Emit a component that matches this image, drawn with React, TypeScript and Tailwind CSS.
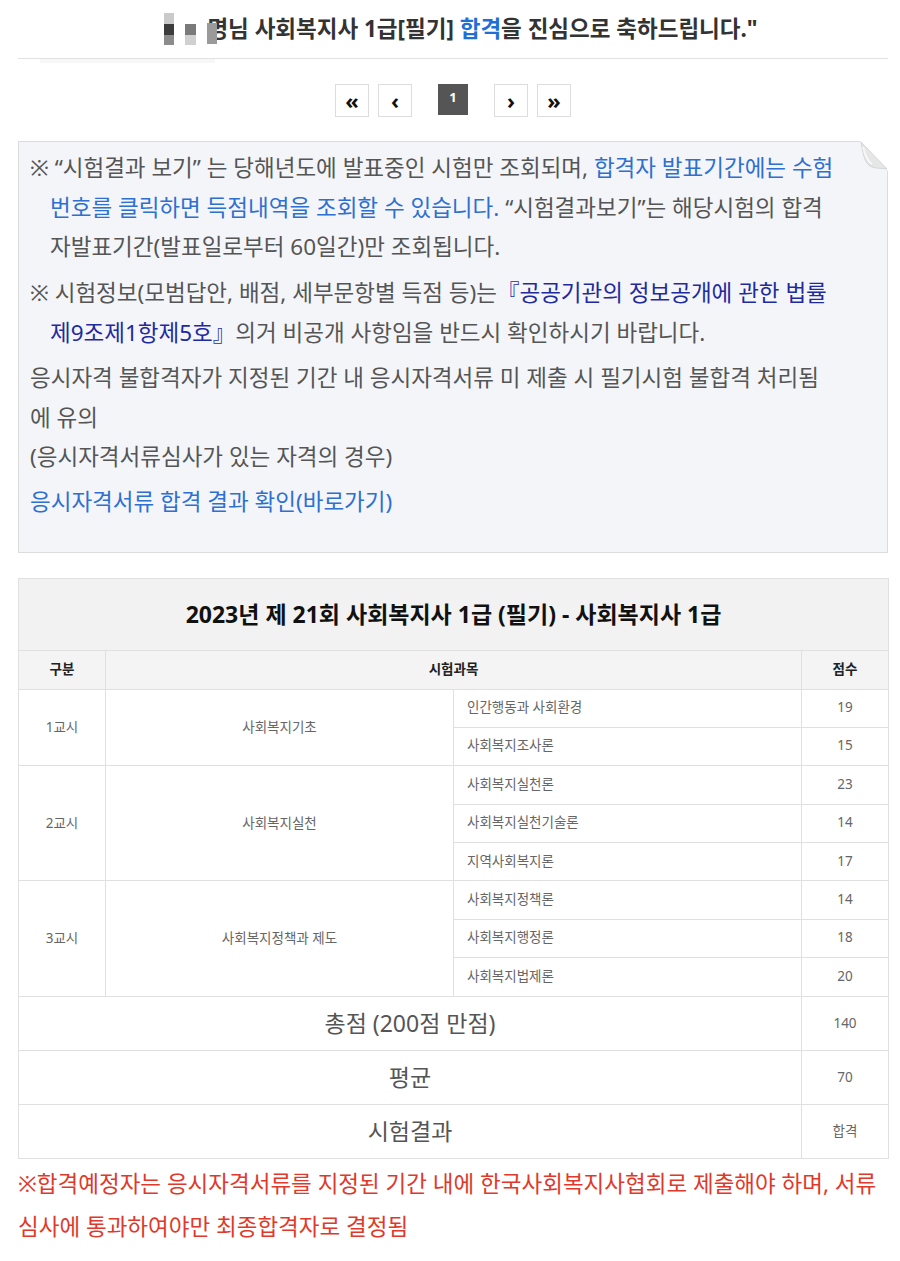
import React from "react";

const FONT = "font-['Noto_Sans','Noto_Sans_CJK_KR',sans-serif]";

function PageBtn({ children, className = "" }: { children: React.ReactNode; className?: string }) {
  return (
    <div
      className={`flex h-[33px] w-[34px] items-center justify-center border border-[#dddddd] bg-white pb-[2px] text-[22px] font-bold leading-none text-[#111] ${className}`}
    >
      {children}
    </div>
  );
}

const rows: { group: string; groupName: string; subjects: [string, string][] }[] = [
  { group: "1교시", groupName: "사회복지기초", subjects: [["인간행동과 사회환경", "19"], ["사회복지조사론", "15"]] },
  {
    group: "2교시",
    groupName: "사회복지실천",
    subjects: [["사회복지실천론", "23"], ["사회복지실천기술론", "14"], ["지역사회복지론", "17"]],
  },
  {
    group: "3교시",
    groupName: "사회복지정책과 제도",
    subjects: [["사회복지정책론", "14"], ["사회복지행정론", "18"], ["사회복지법제론", "20"]],
  },
];

const cell = "border border-[#e0e0e0]";

export default function App() {
  return (
    <div className={`${FONT} min-h-[1261px] w-[900px] bg-white px-[18px] pr-[12px]`}>
      {/* Title */}
      <div className="flex h-[59px] items-center justify-center border-b border-[#e2e2e2] pl-[16px]">
        <div className="flex items-center">
          <div className="flex h-[32px] items-start">
            <div className="flex w-[10px] flex-col">
              <div className="h-[11px] bg-[#cacaca]" />
              <div className="h-[11px] bg-[#3c3c3c]" />
              <div className="h-[10px] bg-[#8c8c8c]" />
            </div>
            <div className="ml-[11px] mt-[11px] flex w-[11px] flex-col">
              <div className="h-[11px] bg-[#7a7a7a]" />
              <div className="h-[10px] bg-[#d0d0d0]" />
            </div>
          </div>
          <div className="relative ml-[11px] text-[22.5px] font-bold leading-[30px] text-[#333]">
            <div className="absolute left-0 top-[9px] h-[21px] w-[10px] bg-[#9a9a9a]" />
            명님 사회복지사 1급[필기] <span className="text-[#1f6fd6]">합격</span>을 진심으로 축하드립니다."
          </div>
        </div>
      </div>
      <div className="ml-[22px] h-[4px] w-[175px] bg-[#f7f7f7]" />

      {/* Pagination */}
      <div className="mt-[21px] flex items-start justify-center">
        <PageBtn>«</PageBtn>
        <PageBtn className="ml-[9px]">‹</PageBtn>
        <div className="ml-[26px] flex h-[31px] w-[30px] items-center justify-center bg-[#555555] pb-[3px] text-[13px] font-bold text-white">
          1
        </div>
        <PageBtn className="ml-[26px]">›</PageBtn>
        <PageBtn className="ml-[9px]">»</PageBtn>
      </div>

      {/* Notice */}
      <div className="relative mt-[24px] border border-[#dcdcdc] bg-[#f4f5f9] pb-[30px] pl-[11px] pr-[8px] pt-[6px] text-[22.5px] leading-[39.5px] text-[#555]">
        <svg className="absolute right-[-1px] top-[-1px]" width="28" height="30" viewBox="0 0 28 30">
          <polygon points="0,0 28,0 28,30" fill="#ffffff" />
          <path d="M1 1 L27 28 C22 27 15 28 10 25 C4 21 3 12 1 1 Z" fill="#e6e6e6" stroke="#cfcfcf" strokeWidth="0.8" />
          <path d="M3 6 C5 14 7 20 12 23" stroke="#f7f7f7" strokeWidth="2" fill="none" />
        </svg>
        <p className="whitespace-nowrap pl-[20px] -indent-[20px]">
          ※ “시험결과 보기” 는 당해년도에 발표중인 시험만 조회되며, <span className="text-[#2e6fd2]">합격자 발표기간에는 수험</span>
          <br />
          <span className="text-[#2e6fd2]">번호를 클릭하면 득점내역을 조회할 수 있습니다.</span> “시험결과보기”는 해당시험의 합격
          <br />
          자발표기간(발표일로부터 60일간)만 조회됩니다.
        </p>
        <p className="mt-[6.5px] whitespace-nowrap pl-[20px] -indent-[20px]">
          ※ 시험정보(모범답안, 배점, 세부문항별 득점 등)는<span className="text-[#1e2a9e]">『공공기관의 정보공개에 관한 법률</span>
          <br />
          <span className="text-[#1e2a9e]">제9조제1항제5호』</span>의거 비공개 사항임을 반드시 확인하시기 바랍니다.
        </p>
        <p className="mt-[6px] whitespace-nowrap">
          응시자격 불합격자가 지정된 기간 내 응시자격서류 미 제출 시 필기시험 불합격 처리됨
          <br />에 유의
          <br />
          (응시자격서류심사가 있는 자격의 경우)
        </p>
        <p className="mt-[5.5px] text-[#2e6fd2]">응시자격서류 합격 결과 확인(바로가기)</p>
      </div>

      {/* Score table */}
      <table className="mt-[25px] w-[870px] table-fixed border-collapse">
        <colgroup>
          <col className="w-[87px]" />
          <col className="w-[348px]" />
          <col className="w-[348px]" />
          <col className="w-[87px]" />
        </colgroup>
        <thead>
          <tr>
            <th colSpan={4} className={`${cell} h-[72px] bg-[#f2f2f2] text-[23px] font-bold text-[#111]`}>
              2023년 제 21회 사회복지사 1급 (필기) - 사회복지사 1급
            </th>
          </tr>
          <tr className="bg-[#f4f4f4] text-[13.5px] font-bold text-[#222]">
            <th className={`${cell} h-[39px]`}>구분</th>
            <th colSpan={2} className={cell}>
              시험과목
            </th>
            <th className={cell}>점수</th>
          </tr>
        </thead>
        <tbody className="text-[13.5px] text-[#666]">
          {rows.map((r) =>
            r.subjects.map(([s, score], i) => (
              <tr key={r.group + s} className="h-[38.4px]">
                {i === 0 && (
                  <>
                    <td rowSpan={r.subjects.length} className={`${cell} text-center`}>
                      {r.group}
                    </td>
                    <td rowSpan={r.subjects.length} className={`${cell} text-center`}>
                      {r.groupName}
                    </td>
                  </>
                )}
                <td className={`${cell} pl-[13px] pb-[2px]`}>{s}</td>
                <td className={`${cell} text-center pb-[2px]`}>{score}</td>
              </tr>
            ))
          )}
          {[
            ["총점 (200점 만점)", "140"],
            ["평균", "70"],
            ["시험결과", "합격"],
          ].map(([label, v]) => (
            <tr key={label} className="h-[54px]">
              <td colSpan={3} className={`${cell} text-center text-[23px] text-[#555]`}>
                {label}
              </td>
              <td className={`${cell} text-center`}>{v}</td>
            </tr>
          ))}
        </tbody>
      </table>

      {/* Red note */}
      <p className="mt-[3px] whitespace-nowrap text-[22.5px] leading-[43px] text-[#e0392b]">
        ※합격예정자는 응시자격서류를 지정된 기간 내에 한국사회복지사협회로 제출해야 하며, 서류
        <br />
        심사에 통과하여야만 최종합격자로 결정됨
      </p>
    </div>
  );
}
